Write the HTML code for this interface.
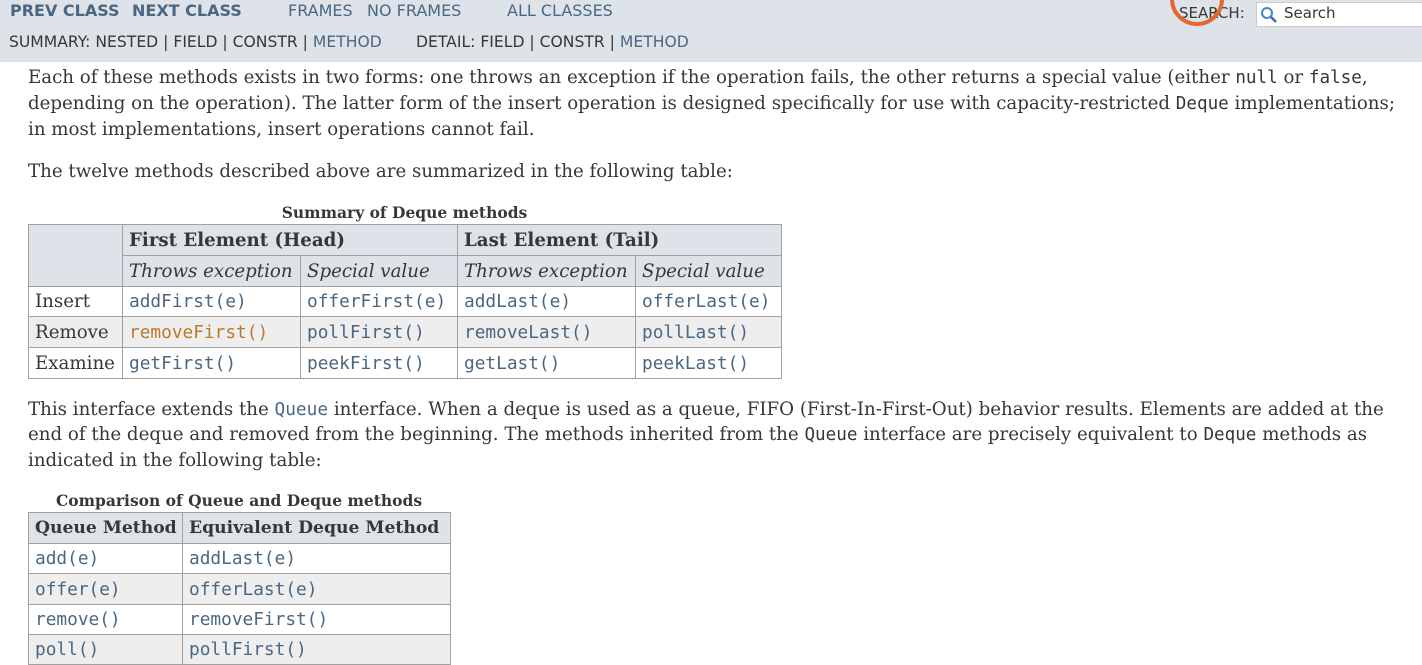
<!DOCTYPE html>
<html><head><meta charset="utf-8"><style>
body{margin:0;width:1422px;height:656px;overflow:hidden;background:#fff;position:relative;font-family:"DejaVu Serif","Liberation Serif",serif;color:#353833}
.hdr{position:absolute;left:0;top:0;width:1422px;height:62px;background:#dee3e9}
.a{position:absolute;font-family:"DejaVu Sans","Liberation Sans",sans-serif;font-size:16px;white-space:nowrap}
.b{font-weight:bold;color:#4a6782}
.l{color:#4a6782}
.p{position:absolute;left:28px;font-size:18.2px;line-height:25px;white-space:nowrap}
code,.m{font-family:"DejaVu Sans Mono","Liberation Mono",monospace;font-size:17.6px}
.m{color:#4a6782;font-size:17.8px}
table{position:absolute;border-collapse:collapse;font-size:18.2px;table-layout:fixed}
td,th{border:1px solid #a0a0a0;padding:0 6px;text-align:left;white-space:nowrap;overflow:hidden}
th{background:#dee3e9;font-weight:bold}
.cap{position:absolute;font-weight:bold;font-size:15.5px;text-align:center}
.alt td{background:#eeeeef}
</style></head><body>
<div class="hdr"></div>
<div class="a b" style="left:10px;top:1px">PREV CLASS</div>
<div class="a b" style="left:132px;top:1px">NEXT CLASS</div>
<div class="a l" style="left:288px;top:1px">FRAMES</div>
<div class="a l" style="left:367px;top:1px">NO FRAMES</div>
<div class="a l" style="left:507px;top:1px">ALL CLASSES</div>
<div class="a" style="left:9px;top:33px;font-size:15.6px">SUMMARY: NESTED | FIELD | CONSTR | <span class="l">METHOD</span></div>
<div class="a" style="left:416px;top:33px;font-size:15.6px">DETAIL: FIELD | CONSTR | <span class="l">METHOD</span></div>
<div class="a" style="left:1179px;top:4px;font-size:15px">SEARCH:</div>
<div style="position:absolute;left:1170px;top:-28px;width:46px;height:46px;border:4px solid #e4672f;border-radius:50%"></div>
<div style="position:absolute;left:1256px;top:2px;width:170px;height:23px;background:#fff;border:1px solid #ccc"></div>
<svg style="position:absolute;left:1260px;top:6px" width="18" height="18"><circle cx="7" cy="7" r="5" fill="none" stroke="#4a86c5" stroke-width="2"/><line x1="11" y1="11" x2="16" y2="16" stroke="#3a6ea5" stroke-width="2.5"/></svg>
<div class="a" style="left:1284px;top:4px;font-size:15px">Search</div>
<div class="p" style="top:65px">Each of these methods exists in two forms: one throws an exception if the operation fails, the other returns a special value (either <code>null</code> or <code>false</code>,<br>depending on the operation). The latter form of the insert operation is designed specifically for use with capacity-restricted <code>Deque</code> implementations;<br>in most implementations, insert operations cannot fail.</div>
<div class="p" style="top:159px">The twelve methods described above are summarized in the following table:</div>
<div class="cap" style="left:28px;width:753px;top:203px">Summary of Deque methods</div>
<table style="left:28px;top:224px;width:753px">
<colgroup><col style="width:94px"><col style="width:178px"><col style="width:157px"><col style="width:178px"><col style="width:146px"></colgroup>
<tr style="height:31px"><th rowspan="2"></th><th colspan="2">First Element (Head)</th><th colspan="2">Last Element (Tail)</th></tr>
<tr style="height:31px"><th style="font-weight:normal;font-style:italic">Throws exception</th><th style="font-weight:normal;font-style:italic">Special value</th><th style="font-weight:normal;font-style:italic">Throws exception</th><th style="font-weight:normal;font-style:italic">Special value</th></tr>
<tr style="height:30px"><td>Insert</td><td class="m">addFirst(e)</td><td class="m">offerFirst(e)</td><td class="m">addLast(e)</td><td class="m">offerLast(e)</td></tr>
<tr style="height:31px" class="alt"><td>Remove</td><td class="m" style="color:#bb7a2a">removeFirst()</td><td class="m">pollFirst()</td><td class="m">removeLast()</td><td class="m">pollLast()</td></tr>
<tr style="height:31px"><td>Examine</td><td class="m">getFirst()</td><td class="m">peekFirst()</td><td class="m">getLast()</td><td class="m">peekLast()</td></tr>
</table>
<div class="p" style="top:397px">This interface extends the <span class="m">Queue</span> interface. When a deque is used as a queue, FIFO (First-In-First-Out) behavior results. Elements are added at the<br>end of the deque and removed from the beginning. The methods inherited from the <code>Queue</code> interface are precisely equivalent to <code>Deque</code> methods as<br>indicated in the following table:</div>
<div class="cap" style="left:28px;width:422px;top:491px">Comparison of Queue and Deque methods</div>
<table style="left:28px;top:512px;width:422px">
<colgroup><col style="width:154px"><col style="width:268px"></colgroup>
<tr style="height:31px"><th style="font-size:17.2px">Queue Method</th><th style="font-size:17.2px">Equivalent Deque Method</th></tr>
<tr style="height:30px"><td class="m">add(e)</td><td class="m">addLast(e)</td></tr>
<tr style="height:31px" class="alt"><td class="m">offer(e)</td><td class="m">offerLast(e)</td></tr>
<tr style="height:30px"><td class="m">remove()</td><td class="m">removeFirst()</td></tr>
<tr style="height:30px" class="alt"><td class="m">poll()</td><td class="m">pollFirst()</td></tr>
</table>
</body></html>
